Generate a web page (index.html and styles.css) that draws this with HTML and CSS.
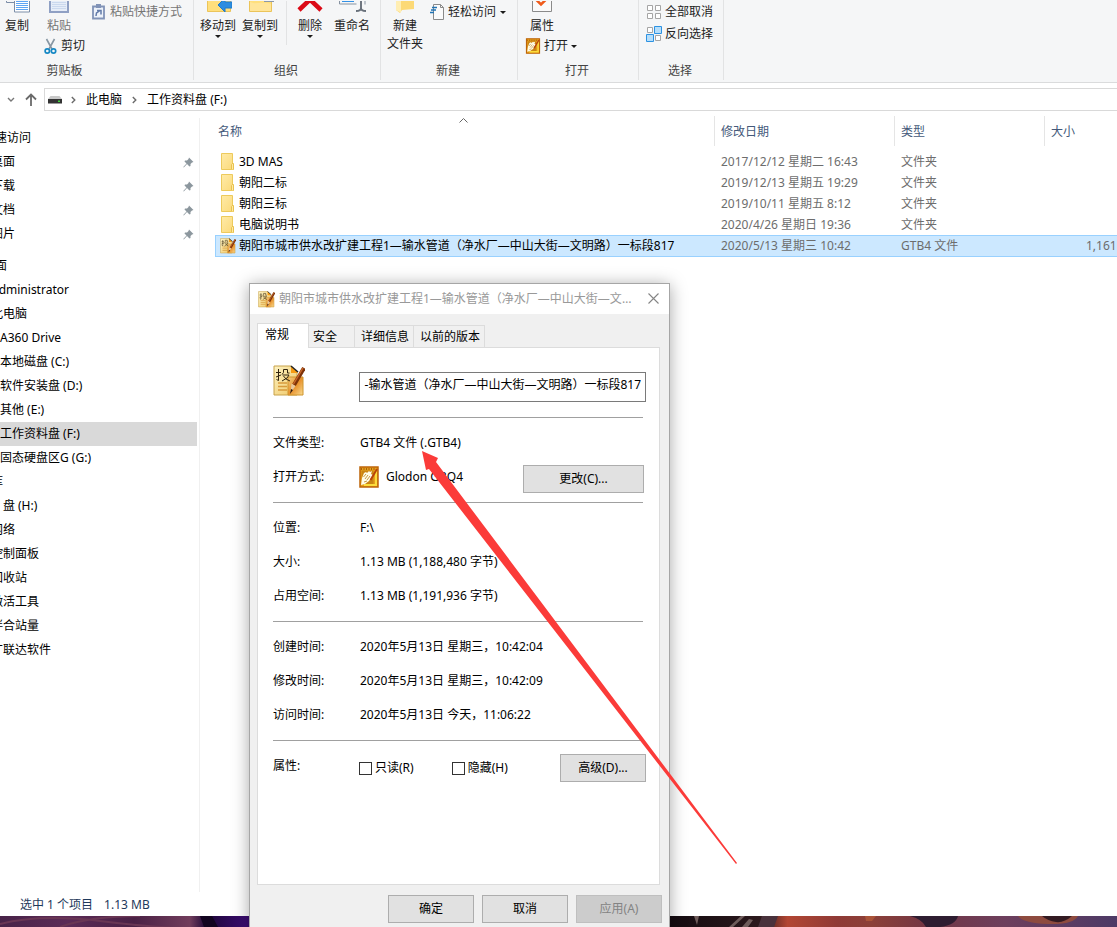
FILE: index.html
```html
<!DOCTYPE html>
<html lang="zh-CN">
<head>
<meta charset="utf-8">
<title>工作资料盘 (F:)</title>
<link rel="stylesheet" href="styles.css">
</head>
<body>
<svg class="defs" aria-hidden="true">
  <defs>
    <linearGradient id="gFolder" x1="0" x2="1" y1="0" y2="1"><stop offset="0" stop-color="#ffeba8"/><stop offset="1" stop-color="#fbd979"/></linearGradient>
    <linearGradient id="gPaper" x1="0" x2="1" y1="0" y2="1"><stop offset="0" stop-color="#fdf3c4"/><stop offset="1" stop-color="#efc663"/></linearGradient>
    <linearGradient id="gSheet" x1="0" x2="1" y1="0" y2="1"><stop offset="0" stop-color="#f3cf82"/><stop offset=".5" stop-color="#e9922c"/><stop offset="1" stop-color="#f8dc92"/></linearGradient>
    <symbol id="folder" viewBox="0 0 14 17">
      <path d="M1.500.5h11v11l1 1v4h-12z" fill="url(#gFolder)" stroke="#edca5c"/>
      <path d="M11.500 16v-4.500l1.500-1.500.5 1v5.500" fill="#ffe9a3" stroke="#e8c24e"/>
    </symbol>
    <symbol id="doc" viewBox="0 0 32 32">
      <path d="M1 1h17l6 6v23H1z" fill="url(#gPaper)" stroke="#c8a24a"/>
      <path d="M18 1l7 7h-7z" fill="#f59a12"/><path d="M18 1l7 6" stroke="#222" stroke-width="1.500"/>
      <path d="M5 18h9M5 21.500h9M5 25h9" stroke="#d79b3d" stroke-width="1.300"/>
      <path d="M15 12h15v18H15z" fill="url(#gSheet)" stroke="#cf942d"/>
      <path d="M31 3L21 20" stroke="#7d3208" stroke-width="4"/><path d="M30 3L20.500 19" stroke="#c9672a" stroke-width="1.400"/>
      <path d="M18.500 18.500l4 2.500-5 7z" fill="#e8c79c"/><path d="M18 24l2 1-3 4z" fill="#2a1408"/>
      <path d="M5.500 4v11.500l-2-1M3 7.500h5M3 12l5-2M10.500 4.500h4v3.500h2M10.500 4.500v3l-1.500 2M9.500 10h6.500l-2 3-5 3M10.500 11l2.500 3 4 2" fill="none" stroke="#32240f"/>
    </symbol>
    <symbol id="app" viewBox="0 0 20 22">
      <path d="M1 1h18v20H1z" fill="#e8a01a" stroke="#bd6408" stroke-width="1.500"/>
      <path d="M2.500 4.500h12v14h-12z" fill="#c98413"/><path d="M16 4h2v16H5v-2h11z" fill="#fbdc3c"/>
      <path d="M3 12l2-5 2-1 1 1 2-2 1 1 2-1-1 3 2 1-2 3-2 3-4 3-4 1z" fill="#fffbe6"/>
      <path d="M4.500 11l2.500-3M6 13l3-4M8 14l3-4M5 16l3-1" stroke="#b9801a" stroke-width=".8"/>
      <path d="M18 3l-6.500 11" stroke="#b8430a" stroke-width="1.900"/><path d="M2 3h15" stroke="#8d4c08" stroke-dasharray="1 1.500" stroke-width="1.500"/>
    </symbol>
    <symbol id="pin" viewBox="0 0 11 11"><path d="M6 .5L10.500 5 9 5.500 7.500 7 7.500 9 6.500 9.500 4 7 .8 10.500.3 10 3.500 6.500 1.500 4.500 2 3.500H4L5.500 2z" fill="#8c979e"/></symbol>
    <symbol id="caret" viewBox="0 0 6 3"><path d="M0 0h6L3 3z" fill="#1b1b1b"/></symbol>
    <symbol id="chev" viewBox="0 0 5 8"><path d="M.8 1l3 3-3 3" fill="none" stroke="#6b6b6b" stroke-width="1.400"/></symbol>
  </defs>
</svg>

<main class="explorer">
  <header class="ribbon">
    <section class="group clipboard">
      <div class="tools">
        <button class="big"><svg width="26" height="16" viewBox="0 0 26 16"><path d="M2.500 0v1.500H10" fill="none" stroke="#7c8ea8"/><path d="M10.500-1h15v12h-15z" fill="#fff" stroke="#7c8ea8"/><path d="M12 .5h12M12 2.500h12M12 4.500h12M12 6.500h12M12 8.500h12" stroke="#5fa5f3"/></svg>复制</button>
        <div class="stack">
          <button class="big off"><svg width="22" height="16" viewBox="0 0 22 16"><path d="M2-1h18v12H2z" fill="#e6edf8" stroke="#8fa0c4" stroke-width="2"/><path d="M4 1.500h14M4 3.500h14M4 5.500h14M4 7.500h14" stroke="#cbd9ee"/></svg>粘贴</button>
          <button class="line cut"><svg width="13" height="17" viewBox="0 0 13 17"><path d="M2.500 1l5.500 10M10.500 1L5 11" stroke="#8796a3" stroke-width="1.600"/><circle cx="3.300" cy="13" r="2.200" fill="none" stroke="#1688c4" stroke-width="1.700"/><circle cx="9.500" cy="13" r="2.200" fill="none" stroke="#1688c4" stroke-width="1.700"/></svg>剪切</button>
        </div>
        <button class="line off"><svg width="13" height="16" viewBox="0 0 13 16"><path d="M1 2.500h11v12H1z" fill="#edf2fa" stroke="#8193b7" stroke-width="1.800"/><path d="M4 0h5v4H4z" fill="#8193b7"/><path d="M4 12l.5-3 3-2M5 6.500h4v4" fill="none" stroke="#627ba9" stroke-width="1.500"/></svg>粘贴快捷方式</button>
      </div>
      <h2>剪贴板</h2>
    </section>
    <section class="group organize">
      <div class="tools">
        <button class="big"><svg width="28" height="16" viewBox="0 0 28 16"><path d="M3.500-1h23v11.500h-23z" fill="#ffdf7c" stroke="#ebc45a"/><path d="M14 4l7-7v4h7v6h-7v4z" fill="#2c8de0" stroke="#1f7acb"/></svg>移动到<svg class="drop"><use href="#caret"/></svg></button>
        <button class="big"><svg width="28" height="16" viewBox="0 0 28 16"><path d="M3.500-1h22v11.500h-22z" fill="#ffdf7c" stroke="#ebc45a"/><path d="M4 1c8 3 9-1 21 2v7H4z" fill="#ffe599"/><path d="M18 0h10v1H18z" fill="#8b98a8"/></svg>复制到<svg class="drop"><use href="#caret"/></svg></button>
        <span class="rule"></span>
        <button class="big"><svg width="26" height="16" viewBox="0 0 26 16"><path d="M2 9L13-1.500 24 9" fill="none" stroke="#db0a16" stroke-width="4.500"/><path d="M9 0h8v2H9z" fill="#db0a16"/></svg>删除<svg class="drop"><use href="#caret"/></svg></button>
        <button class="big"><svg width="30" height="16" viewBox="0 0 30 16"><path d="M2.500-1v4h17M28 3.500V-1" fill="none" stroke="#8793a1"/><path d="M5 0h12v1H5z" fill="#3391e6"/><path d="M24-1v8c0 2-2 3-5 3M24 7c0 2 2 3 5 3" fill="none" stroke="#68707a" stroke-width="1.900"/></svg>重命名</button>
      </div>
      <h2>组织</h2>
    </section>
    <section class="group create">
      <div class="tools">
        <button class="big"><svg width="20" height="16" viewBox="0 0 20 16"><path d="M1 0h18v8l-12 1-2 3-4-3z" fill="#fcd976"/><path d="M1 0h5v11.500L1 9z" fill="#ffeeb3"/></svg>新建<br>文件夹</button>
        <button class="line"><svg width="14" height="16" viewBox="0 0 14 16"><path d="M3.500.5h7l3 3v12h-10z" fill="#fbfbfb" stroke="#8a8a8a"/><path d="M10.500.5v3h3" fill="none" stroke="#8a8a8a"/><path d="M2 3.500h5M1 6h5M0 8.500h4" stroke="#2274b5" stroke-width="1.400"/></svg>轻松访问<svg class="drop"><use href="#caret"/></svg></button>
      </div>
      <h2>新建</h2>
    </section>
    <section class="group open">
      <div class="tools stack">
        <button class="big"><svg width="22" height="16" viewBox="0 0 22 16"><path d="M1.500-1h19v11.500h-19z" fill="#fafafa" stroke="#8a8a8a"/><path d="M5.500-1L10 3.500 14.500-1" fill="none" stroke="#ef5b1b" stroke-width="2.600"/></svg>属性</button>
        <button class="line"><svg width="16" height="16"><use href="#app"/></svg>打开<svg class="drop"><use href="#caret"/></svg></button>
      </div>
      <h2>打开</h2>
    </section>
    <section class="group select">
      <div class="tools stack">
        <button class="line"><svg width="16" height="16" viewBox="0 0 16 16" fill="#fff" stroke="#a5a5a5"><path d="M1.500 1.500h5v5h-5zM9.500 1.500h5v5h-5zM1.500 9.500h5v5h-5zM9.500 9.500h5v5h-5z"/></svg>全部取消</button>
        <button class="line"><svg width="16" height="16" viewBox="0 0 16 16" fill="#fff" stroke="#a5a5a5"><path d="M1.500 1.500h5v5h-5zM9.500 9.500h5v5h-5z"/><path d="M8.500.5h7v7h-7zM.5 8.500h7v7h-7z" fill="#b6defa" stroke="#2c92e2"/></svg>反向选择</button>
      </div>
      <h2>选择</h2>
    </section>
  </header>

  <nav class="address">
    <svg width="8" height="6" viewBox="0 0 8 6"><path d="M1 1l3 3 3-3" fill="none" stroke="#777" stroke-width="1.400"/></svg>
    <svg width="12" height="13" viewBox="0 0 12 13"><path d="M6 13V2M1 6.500L6 1.500l5 5" fill="none" stroke="#6a6a6a" stroke-width="1.800"/></svg>
    <div class="crumbs">
      <svg class="drive" width="14" height="8" viewBox="0 0 14 8"><path d="M2.500 0h9L14 3H0z" fill="#c9c9c9"/><path d="M0 3h14v4.500H0z" fill="#333"/><path d="M10 4.500h2v1.500h-2z" fill="#40d63c"/></svg>
      <svg width="5" height="8"><use href="#chev"/></svg><a href="#pc">此电脑</a>
      <svg width="5" height="8"><use href="#chev"/></svg><a href="#f">工作资料盘 (F:)</a>
    </div>
  </nav>

  <div class="content">
    <nav class="side">
      <ul>
        <li class="root"><a href="#q">快速访问</a></li>
        <li><a href="#q1">桌面</a><svg width="11" height="11"><use href="#pin"/></svg></li>
        <li><a href="#q2">下载</a><svg width="11" height="11"><use href="#pin"/></svg></li>
        <li><a href="#q3">文档</a><svg width="11" height="11"><use href="#pin"/></svg></li>
        <li><a href="#q4">图片</a><svg width="11" height="11"><use href="#pin"/></svg></li>
      </ul>
      <ul>
        <li class="root"><a href="#d">桌面</a></li>
        <li><a href="#d1">Administrator</a></li>
        <li><a href="#d2">此电脑</a></li>
        <li class="sub"><a href="#d3">A360 Drive</a></li>
        <li class="sub"><a href="#c">本地磁盘 (C:)</a></li>
        <li class="sub"><a href="#dd">软件安装盘 (D:)</a></li>
        <li class="sub"><a href="#e">其他 (E:)</a></li>
        <li class="sub current"><a href="#f">工作资料盘 (F:)</a></li>
        <li class="sub"><a href="#g">固态硬盘区G (G:)</a></li>
        <li><a href="#lib">库</a></li>
        <li><a href="#h">U 盘 (H:)</a></li>
        <li><a href="#net">网络</a></li>
        <li><a href="#cp">控制面板</a></li>
        <li><a href="#bin">回收站</a></li>
        <li><a href="#act">激活工具</a></li>
        <li><a href="#mix">拌合站量</a></li>
        <li><a href="#gld">广联达软件</a></li>
      </ul>
    </nav>
    <div class="files">
      <table>
        <colgroup><col class="c-name"><col class="c-date"><col class="c-type"><col class="c-size"></colgroup>
        <thead><tr><th>名称<svg class="sort" width="9" height="5" viewBox="0 0 9 5"><path d="M.5 4.500l4-4 4 4" fill="none" stroke="#666"/></svg></th><th>修改日期</th><th>类型</th><th>大小</th></tr></thead>
        <tbody>
          <tr><td><span class="name"><svg width="14" height="17"><use href="#folder"/></svg>3D MAS</span></td><td>2017/12/12 星期二 16:43</td><td>文件夹</td><td></td></tr>
          <tr><td><span class="name"><svg width="14" height="17"><use href="#folder"/></svg>朝阳二标</span></td><td>2019/12/13 星期五 19:29</td><td>文件夹</td><td></td></tr>
          <tr><td><span class="name"><svg width="14" height="17"><use href="#folder"/></svg>朝阳三标</span></td><td>2019/10/11 星期五 8:12</td><td>文件夹</td><td></td></tr>
          <tr><td><span class="name"><svg width="14" height="17"><use href="#folder"/></svg>电脑说明书</span></td><td>2020/4/26 星期日 19:36</td><td>文件夹</td><td></td></tr>
          <tr class="selected"><td><span class="name"><svg width="16" height="16"><use href="#doc"/></svg>朝阳市城市供水改扩建工程1—输水管道（净水厂—中山大街—文明路）一标段817</span></td><td>2020/5/13 星期三 10:42</td><td>GTB4 文件</td><td>1,161 KB</td></tr>
        </tbody>
      </table>
    </div>
  </div>
  <footer class="status"><span>选中 1 个项目</span><span>1.13 MB</span></footer>
</main>
<div class="wallpaper">
  <svg width="100%" height="11" viewBox="0 0 1117 11" preserveAspectRatio="none">
    <defs><linearGradient id="sky"><stop offset="0" stop-color="#482348"/><stop offset=".06" stop-color="#5b2b57"/><stop offset=".12" stop-color="#4a2145"/><stop offset=".17" stop-color="#713d5c"/><stop offset=".185" stop-color="#1c0636"/><stop offset=".22" stop-color="#3b0c70"/><stop offset=".3" stop-color="#200832"/><stop offset=".6" stop-color="#140b10"/><stop offset=".68" stop-color="#2c191d"/><stop offset=".705" stop-color="#b24633"/><stop offset=".75" stop-color="#8f3a36"/><stop offset=".78" stop-color="#8c4038"/><stop offset=".83" stop-color="#733644"/><stop offset=".9" stop-color="#6d3f5d"/><stop offset="1" stop-color="#4d3a66"/></linearGradient></defs>
    <path d="M0 0h1117v11H0z" fill="url(#sky)"/>
    <path d="M0 8Q40-2 100 5T170 11M60 11Q90 0 140 0" fill="none" stroke="#693654" stroke-width="2"/>
    <path d="M200 0h12l6 11h-14z" fill="#12041f"/><path d="M694 0h5l-2 9zM741 0h4l-12 11h-4zM749 3l4 1-5 7h-6z" fill="#6f5c5b"/>
    <path d="M762 0h16l-4 11h-16z" fill="#49323c"/><path d="M865 0h11l-4 5h-6z" fill="#aa5439"/>
    <path d="M910 0h48q-2 9-18 11h-14q-4-8-16-11z" fill="#2e1d31"/>
    <path d="M1018 0h60q-5 9-30 8t-30-8z" fill="#8e4b3f"/><path d="M1042 0h30q-8 7-16 6t-14-6z" fill="#331b22"/>
  </svg>
</div>

<section class="dialog" role="dialog" aria-labelledby="dlg-title">
  <header class="titlebar">
    <svg width="17" height="17"><use href="#doc"/></svg>
    <h1 id="dlg-title">朝阳市城市供水改扩建工程1—输水管道（净水厂—中山大街—文明路）一标段817 属性</h1>
    <button class="close" aria-label="关闭"><svg width="11" height="11" viewBox="0 0 11 11"><path d="M.5.5l10 10M10.500.5l-10 10" stroke="#858585" stroke-width="1.100"/></svg></button>
  </header>
  <div class="tabs" role="tablist">
    <button role="tab" class="active" aria-selected="true">常规</button><button role="tab" class="t-safe">安全</button><button role="tab">详细信息</button><button role="tab">以前的版本</button>
  </div>
  <div class="panel">
    <div class="head">
      <svg width="32" height="32"><use href="#doc"/></svg>
      <input type="text" aria-label="文件名" value="-输水管道（净水厂—中山大街—文明路）一标段817">
    </div>
    <dl>
      <dt>文件类型:</dt><dd>GTB4 文件 (.GTB4)</dd>
      <dt>打开方式:</dt><dd class="with"><svg width="20" height="22"><use href="#app"/></svg>Glodon GBQ4<button class="btn change">更改(C)...</button></dd>
    </dl>
    <dl>
      <dt>位置:</dt><dd>F:\</dd>
      <dt>大小:</dt><dd>1.13 MB (1,188,480 字节)</dd>
      <dt>占用空间:</dt><dd>1.13 MB (1,191,936 字节)</dd>
    </dl>
    <dl>
      <dt>创建时间:</dt><dd>2020年5月13日 星期三，10:42:04</dd>
      <dt>修改时间:</dt><dd>2020年5月13日 星期三，10:42:09</dd>
      <dt>访问时间:</dt><dd>2020年5月13日 今天，11:06:22</dd>
    </dl>
    <div class="attrs-line">
      <span>属性:</span>
      <div class="attrs">
        <label><input type="checkbox">只读(R)</label>
        <label><input type="checkbox">隐藏(H)</label>
        <button class="btn">高级(D)...</button>
      </div>
    </div>
  </div>
  <div class="actions"><button class="btn">确定</button><button class="btn">取消</button><button class="btn" disabled>应用(A)</button></div>
</section>

<svg class="arrow" width="320" height="416" viewBox="0 0 320 416" aria-hidden="true"><path d="M2 1l16 7-2 4 301 401-1 1L9 19l-3 1z" fill="#fb3b39"/></svg>
</body>
</html>
```

FILE: styles.css
```css
* { box-sizing: border-box; }
body {
  margin: 0;
  height: 100vh;
  display: flex;
  flex-direction: column;
  position: relative;
  overflow: hidden;
  background: #fff;
  color: #000;
  font: 12px/18px "Noto Sans", "Noto Sans CJK SC", sans-serif;
}
svg { display: block; flex: none; }
button, input { font: inherit; color: inherit; }
button { border: 0; padding: 0; background: none; white-space: nowrap; }
a { color: inherit; text-decoration: none; }
ul, dl, dd, h1, h2 { margin: 0; padding: 0; font-size: 12px; font-weight: 400; }
ul { list-style: none; }
.defs { position: absolute; width: 0; height: 0; }

.explorer { flex: 1; min-height: 0; display: flex; flex-direction: column; }

/* Ribbon */
.ribbon { display: flex; height: 83px; padding-bottom: 2px; background: #f5f6f7; border-bottom: 1px solid #dadbdc; flex: none; }
.group { display: flex; flex-direction: column; justify-content: space-between; border-right: 1px solid #e2e3e4; color: #222; }
.group h2 { text-align: center; color: #444; }
.group.clipboard h2 { padding-right: 64px; }
.tools { display: flex; align-items: flex-start; padding-top: 1px; }
.tools.stack, .stack { display: flex; flex-direction: column; align-items: flex-start; }
.big { display: flex; flex-direction: column; align-items: center; }
.line { display: flex; align-items: center; gap: 4px; height: 22px; }
.off { color: #757575; }
.drop { width: 6px; height: 3px; }
.clipboard { width: 194px; }
.clipboard .tools { padding-left: 4px; gap: 8px; }
.clipboard .tools > .line { margin-left: -1px; gap: 5px; }
.clipboard .stack { padding-left: 6px; }
.clipboard .stack .big { padding-left: 3px; }
.organize { width: 187px; }
.organize .tools { padding-left: 6px; gap: 6px; }
.organize h2, .create h2, .open h2, .select h2 { padding-right: 2px; }
.rule { width: 1px; height: 44px; margin: 0 4px 0 2px; background: #e2e3e4; }
.organize .rule + .big { margin-right: 5px; }
.create { width: 137px; }
.create .tools { padding-left: 6px; gap: 7px; }
.open { width: 121px; }
.open .tools { padding-left: 7px; }
.open .big { padding-left: 5px; }
.open .line { gap: 3px; }
.select { width: 85px; }
.select .tools { padding-left: 7px; }
.select .line { gap: 3px; }

/* Address bar */
.address { display: flex; align-items: center; gap: 12px; height: 28px; padding: 5px 0 0 7px; flex: none; }
.address > svg + svg { margin-right: -6px; margin-left: -2px; }
.crumbs { flex: 1; display: flex; align-items: center; gap: 10px; height: 23px; margin-left: 1px; padding-left: 3px; border: 1px solid #d9d9d9; border-right: 0; }
.drive { margin-right: -1px; }

/* Navigation pane and file list */
.content { flex: 1; min-height: 0; display: flex; }
.side { width: 200px; flex: none; overflow: hidden; padding-top: 8px; margin-top: 7px; border-right: 1px solid #f0f0f0; }
.side ul { margin-left: -17px; margin-bottom: 8px; }
.side li { display: flex; align-items: center; justify-content: space-between; height: 24px; padding: 0 5px 0 8px; margin-right: 2px; white-space: nowrap; }
.side li svg { margin-right: -2px; }
.side .root { padding-left: 0; }
.side .sub { padding-left: 17px; }
.side .current { background: #d9d9d9; }
.files { flex: 1; min-width: 0; overflow: hidden; padding: 5px 0 0 15px; }
table { width: 926px; table-layout: fixed; border-collapse: separate; border-spacing: 0; }
.c-name { width: 500px; }
.c-date { width: 180px; }
.c-type { width: 150px; }
.c-size { width: 96px; }
th { position: relative; height: 30px; padding: 2px 6px 0; text-align: left; font-weight: 400; color: #44597a; border-right: 1px solid #e5e5e5; }
th:first-child { padding-left: 3px; }
.sort { position: absolute; left: 244px; top: 2px; }
tbody::before { content: ""; display: block; height: 5px; }
td { height: 21px; padding: 0 6px; color: #6d6d6d; white-space: nowrap; }
td:first-child { padding-left: 5px; color: #000; }
td:last-child { text-align: right; }
.name { display: flex; align-items: center; gap: 5px; }
.selected .name { gap: 3px; }
.selected td { height: 22px; background: #cce8ff; border: solid #99d1ff; border-width: 1px 0; }
.selected td:first-child { border-left-width: 1px; padding-left: 4px; }

.status { display: flex; flex: none; height: 24px; color: #1e395b; }
.status span { padding: 4px 11px 0 0; }
.status span:first-child { margin-left: 9px; padding-left: 11px; }
.wallpaper { flex: none; height: 11px; }

/* Properties dialog */
.dialog { position: absolute; left: 249px; top: 283px; bottom: 0; width: 421px; display: flex; flex-direction: column; background: #f0f0f0; border: 1px solid #a6a6a6; border-bottom: 0; box-shadow: 0 2px 16px rgba(0, 0, 0, .35); }
.titlebar { display: flex; align-items: center; height: 30px; padding: 0 10px 0 8px; gap: 4px; background: #fff; color: #999; }
.titlebar h1 { width: 358px; flex: none; overflow: hidden; text-overflow: ellipsis; white-space: nowrap; }
.close { margin: 0 0 2px auto; }
.tabs { display: flex; align-items: flex-end; margin: 9px 9px 0 7px; }
.tabs button { height: 22px; padding: 0 4px 0 6px; border: 1px solid #dcdcdc; border-width: 1px 1px 0 0; background: #f0f0f0; }
.tabs .t-safe { width: 46px; padding-left: 4px; text-align: left; }
.tabs .active { height: 25px; width: 52px; margin-bottom: -1px; padding: 0 0 3px 7px; text-align: left; background: #fff; border-left-width: 1px; position: relative; }
.panel { margin: 0 9px 0 7px; padding: 0 13px 0 15px; height: 538px; background: #fff; border: 1px solid #dcdcdc; }
.head { display: flex; justify-content: space-between; padding: 17px 0 15px; }
.head input { width: 287px; height: 30px; margin-top: 7px; padding: 0 4px 7px; border: 1px solid #7a7a7a; background: #fff; text-align: right; }
dl { display: grid; grid-template-columns: 87px 1fr; grid-auto-rows: 34px; align-items: center; margin-right: 3px; padding: 8px 0; border-top: 1px solid #a0a0a0; }
.with { display: flex; align-items: center; gap: 7px; margin-left: -1px; }
.btn { width: 86px; height: 28px; background: #e1e1e1; border: 1px solid #adadad; }
.change { width: 121px; margin: 3px -1px 0 auto; }
.attrs-line { display: grid; grid-template-columns: 86px 1fr; padding-top: 7px; border-top: 1px solid transparent; background: linear-gradient(#a0a0a0, #a0a0a0) 0 0 / calc(100% - 3px) 1px no-repeat border-box; }
.attrs-line > span { line-height: 36px; }
.attrs { display: flex; align-items: center; height: 40px; gap: 38px; }
.attrs label { display: flex; align-items: center; gap: 3px; }
.attrs input { appearance: none; width: 13px; height: 13px; margin: 0; border: 1px solid #333; background: #fff; }
.attrs .btn { margin-left: auto; }
.actions { display: flex; justify-content: flex-end; gap: 8px; padding: 10px 7px 4px 0; }
.btn:disabled { background: #ccc; border-color: #bfbfbf; color: #838383; }

.arrow { position: absolute; left: 420px; top: 450px; pointer-events: none; }
```
